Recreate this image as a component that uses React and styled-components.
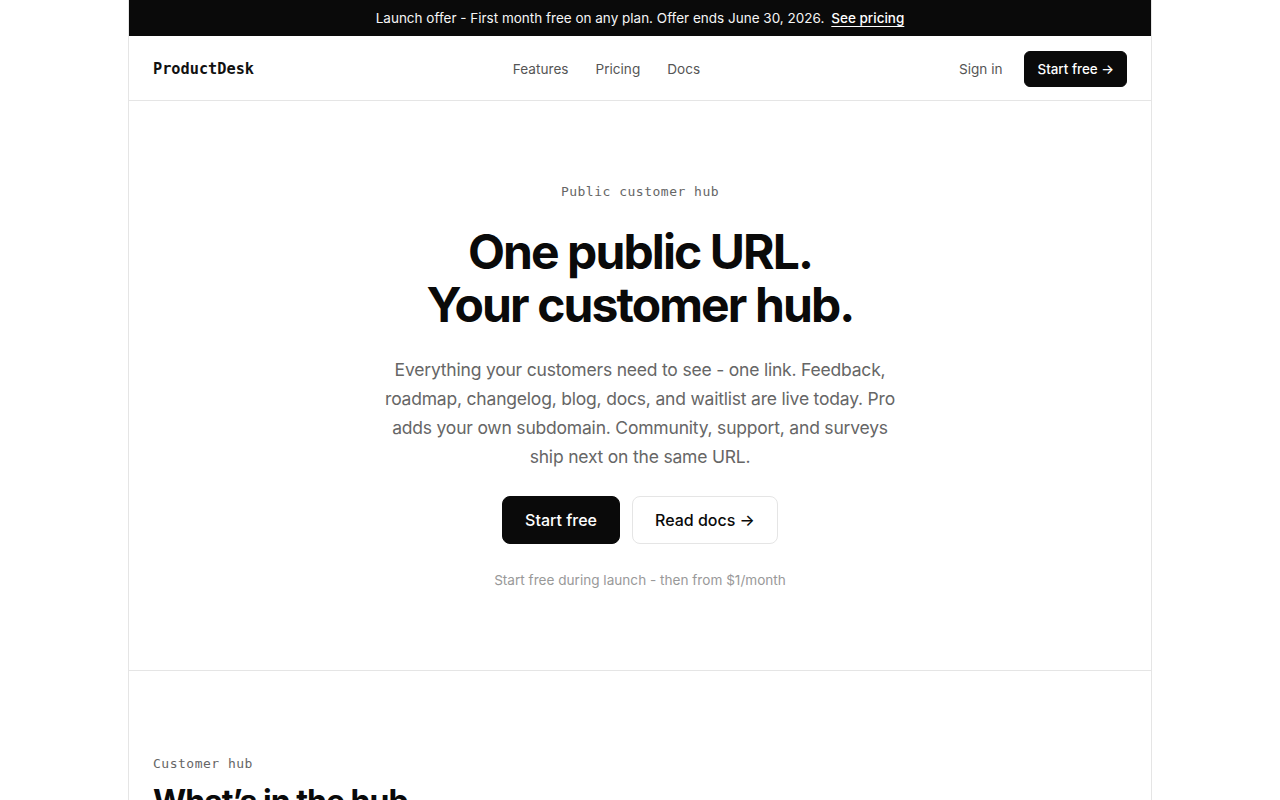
import React from 'react';
import styled, { createGlobalStyle } from 'styled-components';

const GlobalStyle = createGlobalStyle`
  * { box-sizing: border-box; }
  body {
    margin: 0;
    background: #fff;
    color: #0a0a0a;
    font-family: Inter, "Noto Sans", sans-serif;
    -webkit-font-smoothing: antialiased;
  }
`;

const mono = `"DejaVu Sans Mono", "Liberation Mono", monospace`;

const Page = styled.div`
  max-width: 1024px;
  margin: 0 auto;
  border-left: 1px solid #e5e5e5;
  border-right: 1px solid #e5e5e5;
  min-height: 100vh;
`;

const Banner = styled.div`
  background: #0a0a0a;
  color: #f5f5f5;
  height: 36px;
  display: flex;
  align-items: center;
  justify-content: center;
  gap: 7px;
  font-size: 13.5px;
`;

const BannerLink = styled.a`
  color: #fff;
  font-weight: 500;
  text-decoration: underline;
  text-underline-offset: 3px;
`;

const Nav = styled.header`
  height: 65px;
  display: flex;
  align-items: center;
  justify-content: space-between;
  padding: 2px 24px 0;
  border-bottom: 1px solid #e5e5e5;
`;

const Logo = styled.span`
  font-family: ${mono};
  font-weight: 700;
  font-size: 15.25px;
  color: #111;
`;

const NavLinks = styled.nav`
  display: flex;
  gap: 27px;
`;

const NavLink = styled.a`
  font-size: 13.6px;
  color: #555;
  text-decoration: none;
`;

const NavActions = styled.div`
  display: flex;
  align-items: center;
  gap: 22px;
`;

const Button = styled.a`
  display: inline-flex;
  align-items: center;
  justify-content: center;
  text-decoration: none;
  font-weight: 500;
  border-radius: ${p => (p.$small ? '6px' : '8px')};
  height: ${p => (p.$small ? '36px' : '48px')};
  padding: 0 ${p => (p.$small ? '12px' : '22px')};
  font-size: ${p => (p.$small ? '13.4px' : '16px')};
  background: ${p => (p.$outline ? '#fff' : '#0a0a0a')};
  color: ${p => (p.$outline ? '#0a0a0a' : '#fff')};
  border: 1px solid ${p => (p.$outline ? '#e5e5e5' : '#0a0a0a')};
`;

const Hero = styled.section`
  display: flex;
  flex-direction: column;
  align-items: center;
  text-align: center;
  padding: 83px 24px 82px;
  border-bottom: 1px solid #e5e5e5;
`;

const Eyebrow = styled.p`
  margin: 0;
  font-family: ${mono};
  font-size: 13px;
  letter-spacing: 0.5px;
  color: #666;
`;

const Title = styled.h1`
  margin: 26px 0 0;
  font-size: 48px;
  line-height: 53px;
  font-weight: 700;
  letter-spacing: -1.9px;
  color: #0a0a0a;
`;

const Lead = styled.p`
  margin: 24px 0 0;
  max-width: 520px;
  font-size: 17.5px;
  line-height: 29px;
  letter-spacing: -0.2px;
  color: #666;
`;

const Actions = styled.div`
  display: flex;
  gap: 12px;
  margin-top: 25px;
`;

const Note = styled.p`
  margin: 28px 0 0;
  font-size: 13.6px;
  color: #999;
`;

const Section = styled.section`
  padding: 85px 24px 40px;
`;

const SectionTitle = styled.h2`
  margin: 12px 0 0;
  font-size: 32px;
  line-height: 38px;
  font-weight: 700;
  letter-spacing: -1px;
`;

export default function App() {
  return (
    <>
      <GlobalStyle />
      <Page>
        <Banner>
          <span>Launch offer - First month free on any plan. Offer ends June 30, 2026.</span>
          <BannerLink href="#pricing">See pricing</BannerLink>
        </Banner>
        <Nav>
          <Logo>ProductDesk</Logo>
          <NavLinks>
            <NavLink href="#features">Features</NavLink>
            <NavLink href="#pricing">Pricing</NavLink>
            <NavLink href="#docs">Docs</NavLink>
          </NavLinks>
          <NavActions>
            <NavLink href="#signin">Sign in</NavLink>
            <Button $small href="#start">Start free →</Button>
          </NavActions>
        </Nav>
        <Hero>
          <Eyebrow>Public customer hub</Eyebrow>
          <Title>
            One public URL.
            <br />
            Your customer hub.
          </Title>
          <Lead>
            Everything your customers need to see - one link. Feedback, roadmap, changelog, blog, docs, and
            waitlist are live today. Pro adds your own subdomain. Community, support, and surveys ship next on
            the same URL.
          </Lead>
          <Actions>
            <Button href="#start">Start free</Button>
            <Button $outline href="#docs">Read docs →</Button>
          </Actions>
          <Note>Start free during launch - then from $1/month</Note>
        </Hero>
        <Section>
          <Eyebrow>Customer hub</Eyebrow>
          <SectionTitle>What’s in the hub</SectionTitle>
        </Section>
      </Page>
    </>
  );
}
